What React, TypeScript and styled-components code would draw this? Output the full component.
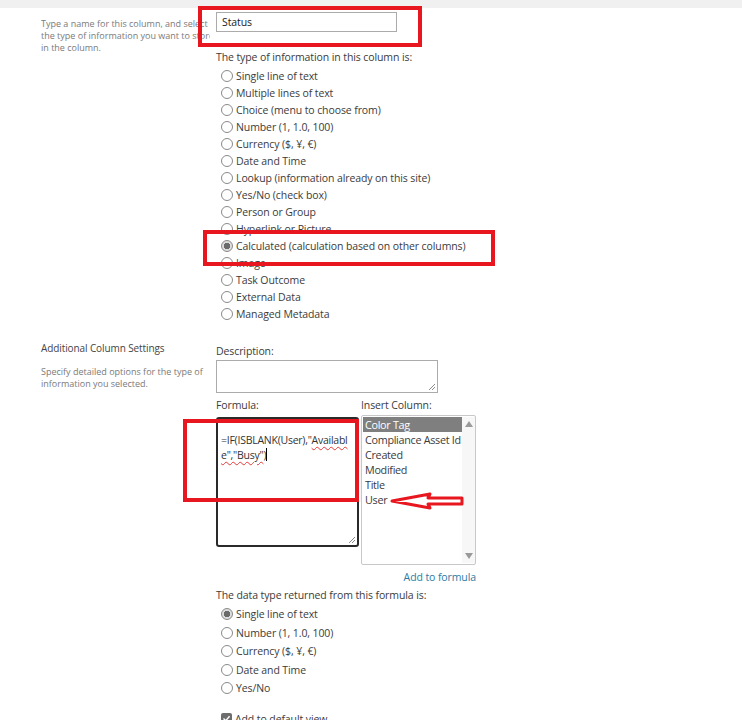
import React from "react";
import styled, { createGlobalStyle } from "styled-components";

const colors = {
  text: "#3b3b3b",
  faded: "#7a7a7a",
  border: "#ababab",
  red: "#e8161f",
  link: "#2b7ba4",
  selected: "#7f7f7f",
};

const GlobalStyle = createGlobalStyle`
  html, body {
    margin: 0;
    padding: 0;
    background: #fff;
  }
  body {
    font-family: "Open Sans", "Noto Sans", sans-serif;
    font-size: 10.5px;
    letter-spacing: -0.1px;
    color: ${colors.text};
  }
`;

const Page = styled.div`
  position: relative;
  width: 742px;
  height: 720px;
  overflow: hidden;
`;

const TopBar = styled.div`
  height: 8px;
  background: #f0f0f0;
`;

const Section = styled.div<{ $top: number }>`
  display: grid;
  grid-template-columns: 175px 1fr;
  padding-left: 41px;
  margin-top: ${(p) => p.$top}px;
`;

const Side = styled.div<{ $pad: number }>`
  padding-top: ${(p) => p.$pad}px;
  padding-right: 6px;
`;

const SideTitle = styled.div`
  font-size: 10px;
  line-height: 14px;
  color: #444;
`;

const SideText = styled.div<{ $gap?: number }>`
  font-size: 9px;
  letter-spacing: 0;
  line-height: 12px;
  color: ${colors.faded};
  margin-top: ${(p) => p.$gap ?? 0}px;
  white-space: nowrap;
  overflow: hidden;
`;

const Main = styled.div<{ $pad?: number }>`
  padding-top: ${(p) => p.$pad ?? 0}px;
  display: flex;
  flex-direction: column;
`;

const TextBox = styled.div`
  box-sizing: border-box;
  width: 181px;
  height: 20px;
  border: 1px solid ${colors.border};
  padding: 0 5px;
  line-height: 18px;
  color: #222;
`;

const Label = styled.div<{ $top?: number }>`
  line-height: 15px;
  margin-top: ${(p) => p.$top ?? 0}px;
`;

const RadioList = styled.div<{ $top: number; $row: number }>`
  display: flex;
  flex-direction: column;
  margin-top: ${(p) => p.$top}px;
  padding-left: 5px;

  & > * {
    height: ${(p) => p.$row}px;
  }
`;

const RadioRow = styled.label`
  display: flex;
  align-items: center;
  gap: 3px;
  white-space: nowrap;
`;

const RadioDot = styled.span<{ $on?: boolean }>`
  box-sizing: border-box;
  width: 12px;
  height: 12px;
  border-radius: 50%;
  border: 1px solid #8a8a8a;
  background: ${(p) =>
    p.$on ? "radial-gradient(circle, #6a6a6a 0 3px, #dcdcdc 3.5px)" : "#fff"};
  flex: none;
`;

const CheckBox = styled.span`
  box-sizing: border-box;
  width: 11px;
  height: 11px;
  border-radius: 2px;
  background: #6d6d6d;
  display: flex;
  align-items: center;
  justify-content: center;
  flex: none;
`;

const PlainArea = styled.div<{ $w: number; $h: number }>`
  position: relative;
  box-sizing: border-box;
  width: ${(p) => p.$w}px;
  height: ${(p) => p.$h}px;
  border: 1px solid ${colors.border};
`;

const FocusArea = styled(PlainArea)`
  border: 2px solid #2a2a2a;
  border-radius: 3px;
  padding: 14px 0 0 3px;
  line-height: 15px;
  letter-spacing: -0.25px;
  color: #333;
  margin-top: 4px;
  white-space: nowrap;
`;

const Squiggle = styled.span`
  text-decoration: underline wavy #e23a3a;
  text-decoration-thickness: 1px;
  text-underline-offset: 2px;
`;

const Caret = styled.span`
  display: inline-block;
  width: 1px;
  height: 13px;
  background: #000;
  vertical-align: -2px;
`;

const Grip = styled.svg`
  position: absolute;
  right: 1px;
  bottom: 1px;
`;

const FormulaGrid = styled.div`
  display: grid;
  grid-template-columns: 145px 115px;
  align-items: start;
  margin-top: 5px;
`;

const ListBox = styled.div`
  box-sizing: border-box;
  width: 115px;
  height: 150px;
  margin-top: 2px;
  border: 1px solid #c8c8c8;
  border-radius: 2px;
  display: flex;
  padding: 1px 0 1px 1px;
`;

const Options = styled.div`
  flex: 1;
  display: flex;
  flex-direction: column;
  overflow: hidden;
`;

const Option = styled.div<{ $on?: boolean }>`
  height: 15px;
  line-height: 15px;
  padding-left: 2px;
  white-space: nowrap;
  font-size: 10.8px;
  letter-spacing: -0.3px;
  color: ${(p) => (p.$on ? "#fff" : "#3b3b3b")};
  background: ${(p) => (p.$on ? colors.selected : "transparent")};
`;

const ScrollTrack = styled.div`
  width: 13px;
  background: #f7f7f7;
  display: flex;
  flex-direction: column;
  justify-content: space-between;
  align-items: center;
  padding: 4px 0;
`;

const Link = styled.div`
  width: 260px;
  text-align: right;
  line-height: 16px;
  margin-top: 4px;
  color: ${colors.link};
`;

const Annotation = styled.div<{
  $x: number;
  $y: number;
  $w: number;
  $h: number;
}>`
  position: absolute;
  left: ${(p) => p.$x}px;
  top: ${(p) => p.$y}px;
  width: ${(p) => p.$w}px;
  height: ${(p) => p.$h}px;
  box-sizing: border-box;
  border: 4px solid ${colors.red};
  pointer-events: none;
`;

const ArrowMark = styled.svg`
  position: absolute;
  left: 388px;
  top: 490px;
  pointer-events: none;
`;

const columnTypes = [
  "Single line of text",
  "Multiple lines of text",
  "Choice (menu to choose from)",
  "Number (1, 1.0, 100)",
  "Currency ($, ¥, €)",
  "Date and Time",
  "Lookup (information already on this site)",
  "Yes/No (check box)",
  "Person or Group",
  "Hyperlink or Picture",
  "Calculated (calculation based on other columns)",
  "Image",
  "Task Outcome",
  "External Data",
  "Managed Metadata",
];

const returnTypes = [
  "Single line of text",
  "Number (1, 1.0, 100)",
  "Currency ($, ¥, €)",
  "Date and Time",
  "Yes/No",
];

const insertColumns = [
  "Color Tag",
  "Compliance Asset Id",
  "Created",
  "Modified",
  "Title",
  "User",
];

const ResizeGrip = () => (
  <Grip width="8" height="8" viewBox="0 0 8 8">
    <path d="M7 1 L1 7 M7 4 L4 7" stroke="#8a8a8a" strokeWidth="1" />
  </Grip>
);

export default function App() {
  return (
    <Page>
      <GlobalStyle />
      <TopBar />

      <Section $top={4}>
        <Side $pad={6}>
          <SideText>Type a name for this column, and select</SideText>
          <SideText>the type of information you want to store</SideText>
          <SideText>in the column.</SideText>
        </Side>
        <Main>
          <TextBox>Status</TextBox>
          <Label $top={18}>The type of information in this column is:</Label>
          <RadioList $top={2} $row={17}>
            {columnTypes.map((t) => (
              <RadioRow key={t}>
                <RadioDot $on={t.startsWith("Calculated")} />
                {t}
              </RadioRow>
            ))}
          </RadioList>
        </Main>
      </Section>

      <Section $top={18}>
        <Side $pad={1}>
          <SideTitle>Additional Column Settings</SideTitle>
          <SideText $gap={11}>Specify detailed options for the type of</SideText>
          <SideText>information you selected.</SideText>
        </Side>
        <Main $pad={4}>
          <Label>Description:</Label>
          <PlainArea $w={222} $h={33} style={{ marginTop: 1 }}>
            <ResizeGrip />
          </PlainArea>
          <FormulaGrid>
            <Label>Formula:</Label>
            <Label>Insert Column:</Label>
            <FocusArea $w={143} $h={130}>
              =IF(ISBLANK(User),"<Squiggle>Availabl</Squiggle>
              <br />
              <Squiggle>e","Busy"</Squiggle>)
              <Caret />
              <ResizeGrip />
            </FocusArea>
            <ListBox>
              <Options>
                {insertColumns.map((c, i) => (
                  <Option key={c} $on={i === 0}>
                    {c}
                  </Option>
                ))}
              </Options>
              <ScrollTrack>
                <svg width="8" height="6" viewBox="0 0 8 6">
                  <path d="M0 6 L4 0 L8 6 Z" fill="#9a9a9a" />
                </svg>
                <svg width="8" height="6" viewBox="0 0 8 6">
                  <path d="M0 0 L4 6 L8 0 Z" fill="#9a9a9a" />
                </svg>
              </ScrollTrack>
            </ListBox>
          </FormulaGrid>
          <Link>Add to formula</Link>
          <Label $top={3}>The data type returned from this formula is:</Label>
          <RadioList $top={2} $row={18.5}>
            {returnTypes.map((t, i) => (
              <RadioRow key={t}>
                <RadioDot $on={i === 0} />
                {t}
              </RadioRow>
            ))}
          </RadioList>
          <RadioList $top={12} $row={18}>
            <RadioRow>
              <CheckBox>
                <svg width="9" height="9" viewBox="0 0 9 9">
                  <path
                    d="M1.5 4.5 L3.7 6.7 L7.6 2.2"
                    stroke="#fff"
                    strokeWidth="1.4"
                    fill="none"
                  />
                </svg>
              </CheckBox>
              Add to default view
            </RadioRow>
          </RadioList>
        </Main>
      </Section>

      <Annotation $x={198} $y={6} $w={224} $h={41} />
      <Annotation $x={203} $y={230} $w={292} $h={36} />
      <Annotation $x={183} $y={419} $w={176} $h={83} />
      <ArrowMark width="80" height="22" viewBox="0 0 80 22">
        <path
          d="M4 11 L42 4 L40 8 L74 8 L74 14 L40 14 L42 18 Z"
          fill="#fff"
          stroke={colors.red}
          strokeWidth="3"
          strokeLinejoin="round"
        />
      </ArrowMark>
    </Page>
  );
}
